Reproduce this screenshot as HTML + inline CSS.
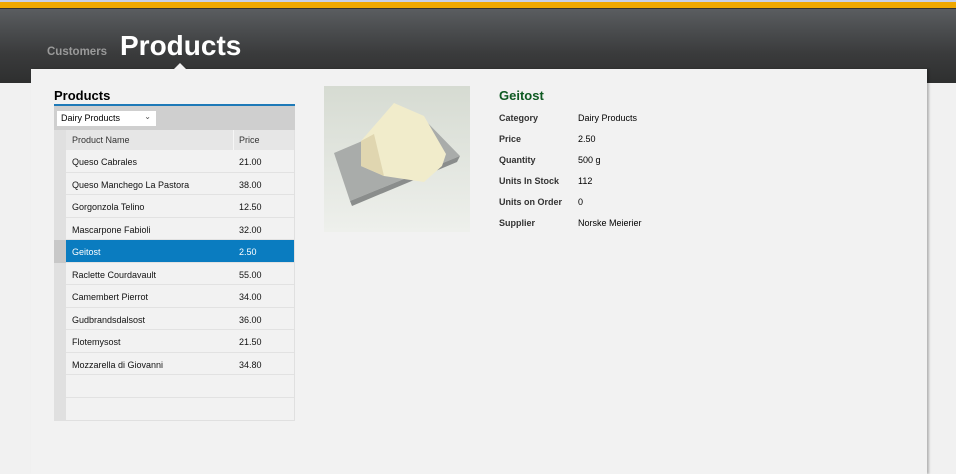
<!DOCTYPE html>
<html><head><meta charset="utf-8"><style>
*{margin:0;padding:0;box-sizing:border-box}
html,body{width:956px;height:474px;overflow:hidden}
body{background:#f1f1f1;font-family:"Liberation Sans",Arial,sans-serif;position:relative}
.top{position:absolute;left:0;top:0;width:956px;height:3px;background:#c9cfe6}
.orange{position:absolute;left:0;top:2px;width:956px;height:6px;background:#f0a800}
.hdr{position:absolute;left:0;top:8px;width:956px;height:75px;background:linear-gradient(#5a5d60,#3a3b3c 60%,#2e2f2f);border-top:1px solid #333}
.cust{position:absolute;left:47px;top:46px;color:#9a9a9a;font-size:11.5px;font-weight:bold}
.prod{position:absolute;left:120px;top:30px;color:#fff;font-size:28px;font-weight:bold}
.tri{position:absolute;left:174px;top:63px;width:0;height:0;border-left:6px solid transparent;border-right:6px solid transparent;border-bottom:6px solid #f2f2f2}
.panel{position:absolute;left:31px;top:69px;width:896px;height:405px;background:#f2f2f2;box-shadow:2px 0 2px rgba(0,0,0,.25)}
.h2{position:absolute;left:54px;top:88px;font-size:13px;font-weight:bold;color:#000}
.line{position:absolute;left:54px;top:104px;width:241px;height:2px;background:#1e7ab8}
.bar{position:absolute;left:54px;top:106px;width:241px;height:24px;background:#cfcfcf}
.sel{position:absolute;left:57px;top:111px;width:99px;height:15px;background:#fff;font-size:9px;padding:2px 4px;color:#000}
.sel span{position:absolute;right:5px;top:1px;font-size:8px;color:#555}
.grid{position:absolute;left:54px;top:130px;width:241px;height:291px;border-right:1px solid #e0e0e0;border-bottom:1px solid #e0e0e0}
.ind{position:absolute;left:0;top:0;width:12px;height:290px;background:#e0e0e0}
.row{position:absolute;left:12px;width:228px;height:22.5px;border-bottom:1px solid #e2e2e2;font-size:9px;color:#111}
.row .n{position:absolute;left:6px;top:7px}
.row .p{position:absolute;left:173px;top:7px}
.hrow{background:#e6e6e6;height:20px;color:#333;border:none}
.hrow .n,.hrow .p{top:5px}
.hrow .sep{position:absolute;left:167px;top:0;width:1px;height:20px;background:#f6f6f6}
.selr{background:#0a7cc0;color:#fff}
.img{position:absolute;left:324px;top:86px;width:146px;height:146px}
.title{position:absolute;left:499px;top:88px;color:#0e5a22;font-size:13px;font-weight:bold}
.lab{position:absolute;left:499px;font-size:9px;font-weight:bold;color:#333}
.val{position:absolute;left:578px;font-size:9px;color:#000}
</style></head><body>
<div class="top"></div><div class="orange"></div>
<div class="hdr"></div>
<div class="cust">Customers</div>
<div class="prod">Products</div>
<div class="panel"></div>
<div class="tri"></div>
<div class="h2">Products</div>
<div class="line"></div>
<div class="bar"></div>
<div class="sel">Dairy Products<span>&#8964;</span></div>
<div class="grid">
<div class="ind"></div>
<div class="row hrow" style="top:0"><span class="n">Product Name</span><span class="sep"></span><span class="p">Price</span></div>
<div class="row" style="top:20px"><span class="n">Queso Cabrales</span><span class="p">21.00</span></div>
<div class="row" style="top:42.5px"><span class="n">Queso Manchego La Pastora</span><span class="p">38.00</span></div>
<div class="row" style="top:65px"><span class="n">Gorgonzola Telino</span><span class="p">12.50</span></div>
<div class="row" style="top:87.5px"><span class="n">Mascarpone Fabioli</span><span class="p">32.00</span></div>
<div class="row selr" style="top:110px"><span class="n">Geitost</span><span class="p">2.50</span></div>
<div class="row" style="top:132.5px"><span class="n">Raclette Courdavault</span><span class="p">55.00</span></div>
<div class="row" style="top:155px"><span class="n">Camembert Pierrot</span><span class="p">34.00</span></div>
<div class="row" style="top:177.5px"><span class="n">Gudbrandsdalsost</span><span class="p">36.00</span></div>
<div class="row" style="top:200px"><span class="n">Flotemysost</span><span class="p">21.50</span></div>
<div class="row" style="top:222.5px"><span class="n">Mozzarella di Giovanni</span><span class="p">34.80</span></div>
<div class="row" style="top:245px"></div>
<div class="row" style="top:267.5px;border:none"></div>
</div>
<div style="position:absolute;left:54px;top:240px;width:12px;height:23px;background:#c8c8c8"></div>
<svg class="img" viewBox="0 0 146 146">
<defs><linearGradient id="bg" x1="0" y1="0" x2="0" y2="1"><stop offset="0" stop-color="#d6dbd2"/><stop offset="1" stop-color="#eef0ec"/></linearGradient></defs>
<rect width="146" height="146" fill="url(#bg)"/>
<polygon points="10,67 97,30 136,70 26,115" fill="#a9acaa"/>
<polygon points="26,115 136,70 133,76 28,120" fill="#8a8d8c"/>
<polygon points="37,55 70,17 100,30 122,68 118,80 100,96 60,90 37,80" fill="#f1eccb"/>
<polygon points="37,55 50,48 60,90 37,80" fill="#e0d6b0"/>
</svg>
<div class="title">Geitost</div>
<div class="lab" style="top:113px">Category</div><div class="val" style="top:113px">Dairy Products</div>
<div class="lab" style="top:134px">Price</div><div class="val" style="top:134px">2.50</div>
<div class="lab" style="top:155px">Quantity</div><div class="val" style="top:155px">500 g</div>
<div class="lab" style="top:176px">Units In Stock</div><div class="val" style="top:176px">112</div>
<div class="lab" style="top:197px">Units on Order</div><div class="val" style="top:197px">0</div>
<div class="lab" style="top:218px">Supplier</div><div class="val" style="top:218px">Norske Meierier</div>
</body></html>
